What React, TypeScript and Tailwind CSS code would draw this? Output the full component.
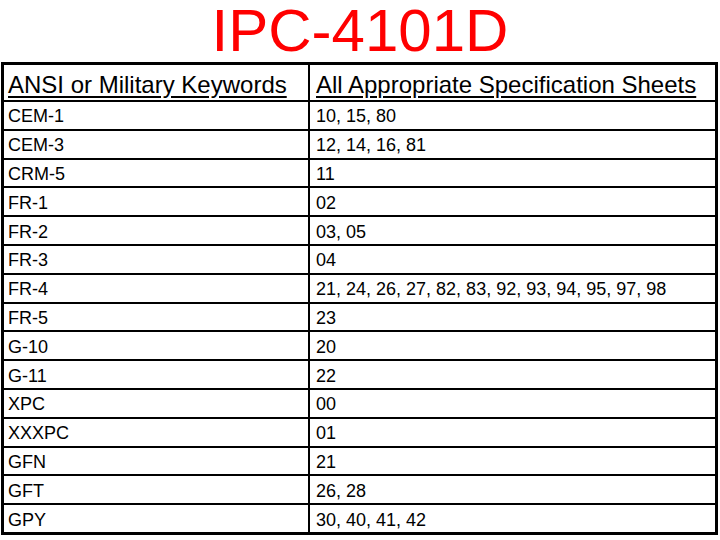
import React from 'react';

const rows: [string, string][] = [
  ['CEM-1', '10, 15, 80'],
  ['CEM-3', '12, 14, 16, 81'],
  ['CRM-5', '11'],
  ['FR-1', '02'],
  ['FR-2', '03, 05'],
  ['FR-3', '04'],
  ['FR-4', '21, 24, 26, 27, 82, 83, 92, 93, 94, 95, 97, 98'],
  ['FR-5', '23'],
  ['G-10', '20'],
  ['G-11', '22'],
  ['XPC', '00'],
  ['XXXPC', '01'],
  ['GFN', '21'],
  ['GFT', '26, 28'],
  ['GPY', '30, 40, 41, 42'],
];

const App: React.FC = () => {
  return (
    <div
      className="w-[720px] h-[540px] bg-white overflow-hidden text-black"
      style={{ fontFamily: '"Liberation Sans", Arial, sans-serif' }}
    >
      {/* title */}
      <div className="h-[62px] text-center text-[60px] leading-[62px] text-[#f00]">
        IPC-4101D
      </div>
      {/* table */}
      <div className="ml-[1px] w-[717px] border-[3px] border-black">
        <div className="flex h-[37px] border-b-2 border-black text-[24px] leading-none">
          <div className="w-[306px] shrink-0 border-r-2 border-black pl-[4px] pt-[4px] flex items-center underline underline-offset-[3px]">
            ANSI or Military Keywords
          </div>
          <div className="flex-1 pl-[6px] pt-[4px] flex items-center underline underline-offset-[3px]">
            All Appropriate Specification Sheets
          </div>
        </div>
        {rows.map(([key, sheets], i) => (
          <div
            key={key}
            className={
              i === rows.length - 1
                ? 'flex h-[26.8px] text-[18px] leading-none'
                : 'flex h-[28.8px] border-b-2 border-black text-[18px] leading-none'
            }
          >
            <div className="w-[306px] shrink-0 border-r-2 border-black pl-[4px] pt-[2px] flex items-center">
              {key}
            </div>
            <div className="flex-1 pl-[6px] pt-[2px] flex items-center">{sheets}</div>
          </div>
        ))}
      </div>
    </div>
  );
};

export default App;
